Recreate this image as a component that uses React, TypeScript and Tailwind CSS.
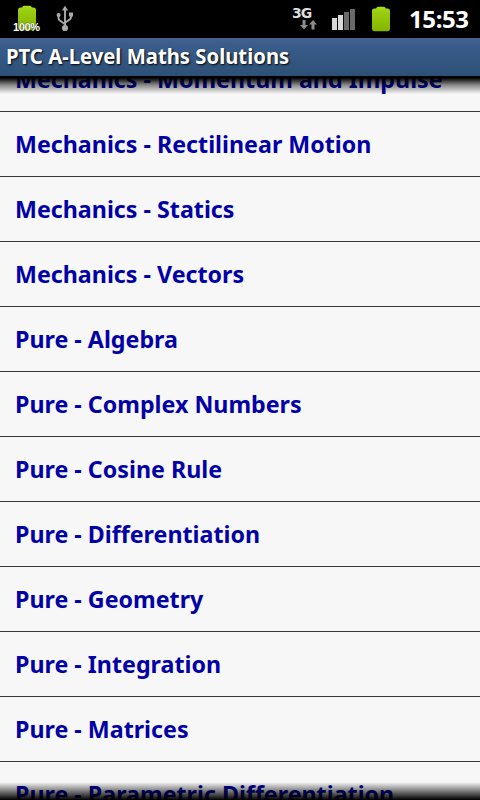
const TOPICS = [
  "Mechanics - Momentum and Impulse",
  "Mechanics - Rectilinear Motion",
  "Mechanics - Statics",
  "Mechanics - Vectors",
  "Pure - Algebra",
  "Pure - Complex Numbers",
  "Pure - Cosine Rule",
  "Pure - Differentiation",
  "Pure - Geometry",
  "Pure - Integration",
  "Pure - Matrices",
  "Pure - Parametric Differentiation",
];

function BatteryIcon({ id }: { id: string }) {
  return (
    <svg width="20" height="26" viewBox="0 0 20 26" aria-hidden="true">
      <defs>
        <linearGradient id={id} x1="0" y1="0" x2="0" y2="1">
          <stop offset="0" stopColor="#a8dc1c" />
          <stop offset="0.25" stopColor="#98cc10" />
          <stop offset="1" stopColor="#84b400" />
        </linearGradient>
      </defs>
      <path
        d="M5 2.500Q5.500.7 7.500.7h5Q14.500.7 15 2.500h1.500Q19 2.500 19 5v18Q19 25.300 16.500 25.300h-13Q1 25.300 1 23V5Q1 2.500 3.500 2.500Z"
        fill={`url(#${id})`}
      />
    </svg>
  );
}

function UsbIcon() {
  return (
    <svg width="18" height="27" viewBox="0 0 18 27" fill="none" stroke="#aaa" strokeWidth="1.900" aria-hidden="true">
      <path d="M9 4v19M2.500 10v3q0 1.500 1 2.200l5.500 4M15 9v3q0 1.500-1 2.200l-5 3.600" />
      <path d="M9 .7 12 5.500H6Z" fill="#aaa" stroke="none" />
      <circle cx="2.600" cy="9.900" r="2" fill="#aaa" stroke="none" />
      <path d="M13 7.500h4v4h-4Z" fill="#aaa" stroke="none" />
      <circle cx="9" cy="23" r="3.100" fill="#aaa" stroke="none" />
    </svg>
  );
}

function DataArrows() {
  return (
    <svg width="17" height="10" viewBox="0 0 17 10" fill="#8c8c8c" aria-hidden="true">
      <path d="M2.500 0h3v5H8L4 9.500 0 5h2.500Z" />
      <path d="M11.500 9.500h3v-5H17L13 0 9 4.500h2.500Z" />
    </svg>
  );
}

function SignalIcon() {
  return (
    <svg width="24" height="22" viewBox="0 0 24 22" aria-hidden="true">
      <path d="M0 9h5v12H0Z" fill="#d8d8d8" />
      <path d="M6 6h5v15H6Z" fill="#d8d8d8" />
      <path d="M12 3h5v18h-5Z" fill="#6a6a6a" />
      <path d="M18 0h5v21h-5Z" fill="#6a6a6a" />
    </svg>
  );
}

function StatusBar() {
  return (
    <div className="flex h-[38px] shrink-0 justify-between bg-black">
      <div className="flex">
        <div className="relative ml-[17px] mt-[5px]">
          <BatteryIcon id="battery-left" />
          <span className="absolute -left-[4px] top-[16px] font-['Liberation_Sans'] text-[11px] font-bold leading-[12px] tracking-[-0.4px] text-white [text-shadow:0_0_1px_#000]">
            100%
          </span>
        </div>
        <div className="ml-[19px] mt-[5px]">
          <UsbIcon />
        </div>
      </div>
      <div className="flex">
        <div className="mt-1.5 flex w-[25px] flex-col">
          <span className="font-['DejaVu_Sans'] text-[14px] font-bold leading-[14px] tracking-[-1px] text-[#ddd]">
            3G
          </span>
          <div className="ml-2">
            <DataArrows />
          </div>
        </div>
        <div className="ml-[15px] mt-[9px]">
          <SignalIcon />
        </div>
        <div className="ml-[15px] mt-1.5">
          <BatteryIcon id="battery-right" />
        </div>
        <span className="ml-[18px] mr-3 mt-0.5 w-[59px] whitespace-nowrap text-[24px] font-bold leading-[34px] tracking-[-0.4px] text-white">
          15:53
        </span>
      </div>
    </div>
  );
}

export default function App() {
  return (
    <div className="flex h-[800px] w-[480px] flex-col overflow-hidden bg-[#f7f7f7] font-['Noto_Sans','Open_Sans',sans-serif]">
      <StatusBar />
      <header className="h-[38px] shrink-0 bg-linear-to-b from-[#466293] via-[#3a5c8a] via-20% to-[#2d5077] pl-1.5 text-[21px] font-bold leading-[36px] text-white [text-shadow:1px_1px_2px_#000]">
        <h1 className="w-max origin-left scale-x-[0.965]">PTC A-Level Maths Solutions</h1>
      </header>
      <main className="relative flex-1 overflow-hidden">
        {/* the list sits part-way through a scroll */}
        <ul className="-mt-[29px]">
          {TOPICS.map((topic) => (
            <li
              key={topic}
              className="h-[65px] whitespace-nowrap border-b border-[#393939] pl-[15px] text-[24px] font-bold leading-[64px] text-[#0000a6]"
            >
              <span className="inline-block origin-left scale-x-[0.968]">{topic}</span>
            </li>
          ))}
        </ul>
        <div className="absolute inset-x-0 top-0 h-[18px] bg-linear-to-b from-black from-10% via-black/45 via-50% to-transparent" />
        <div className="absolute inset-x-0 bottom-0 h-[18px] bg-linear-to-t from-black via-black/50 via-50% to-transparent" />
      </main>
    </div>
  );
}
